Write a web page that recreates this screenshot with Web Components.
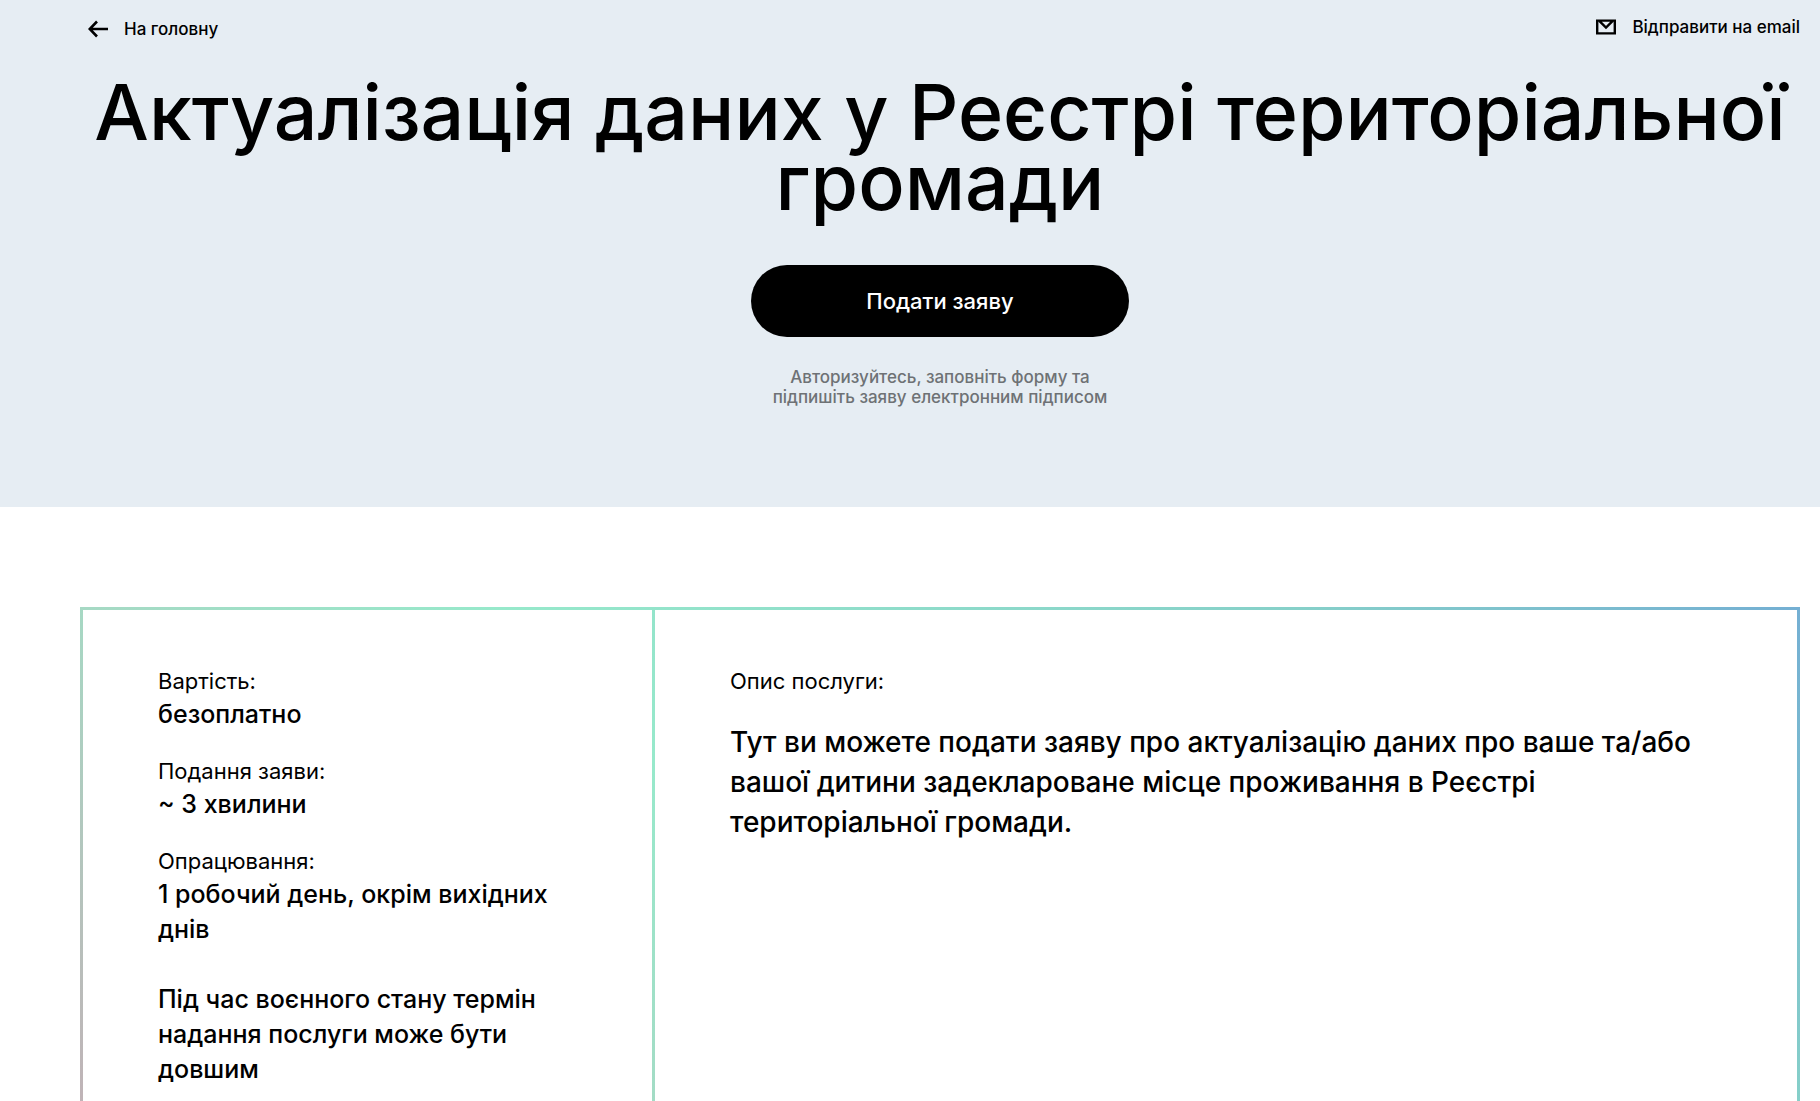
<!DOCTYPE html>
<html lang="uk">
<head>
<meta charset="utf-8">
<title>Актуалізація даних у Реєстрі територіальної громади</title>
<style>
  html, body { height: 100%; }
  body { margin: 0; overflow: hidden; background: #fff; color: #000; font-family: Inter, "Noto Sans", sans-serif; font-weight: 500; }
</style>
</head>
<body>
<service-page></service-page>
<script>
const define = (name, html) => customElements.define(name, class extends HTMLElement {
  constructor() {
    super();
    this.attachShadow({ mode: 'open' }).innerHTML = html;
  }
});

define('icon-link', `
  <style>
    :host { display: block; }
    a { display: flex; align-items: center; gap: 16px; color: inherit; text-decoration: none; font-size: 17px; line-height: 20px; }
  </style>
  <a href="#"><slot name="icon"></slot><span><slot></slot></span></a>`);

define('submit-button', `
  <style>
    :host { display: block; }
    button { width: 378px; height: 72px; border: 0; border-radius: 36px; background: #000; color: #fff; font: inherit; font-size: 22px; line-height: 28px; cursor: pointer; }
  </style>
  <button type="button"><slot></slot></button>`);

define('service-hero', `
  <style>
    :host { display: block; box-sizing: border-box; min-height: 507px; padding: 0 20px 0 80px; background: #e6edf3; }
    nav { display: flex; justify-content: space-between; align-items: flex-start; padding: 17px 0 0 8px; }
    .back { padding-top: 2px; }
    h1 { margin: 38px 0 0; text-align: center; font-size: 77px; line-height: 70px; font-weight: 500; }
    .action { display: flex; flex-direction: column; align-items: center; margin-top: 48px; gap: 30px; }
    p { margin: 0; max-width: 378px; text-align: center; font-size: 17px; line-height: 20px; color: #6e7275; }
    svg { display: block; }
  </style>
  <nav>
    <icon-link class="back"><svg slot="icon" width="20" height="18" viewBox="0 0 20 18" fill="none" stroke="#000" stroke-width="2.6"><path d="M20 9H2M9 1.5L1.7 9L9 16.5"/></svg>На головну</icon-link>
    <icon-link><svg slot="icon" width="20" height="16" viewBox="0 0 20 16" fill="none" stroke="#000" stroke-width="2.4"><path d="M1.2 1.6H18.8V14.4H1.2ZM3.5 2.2L10 8.6L16.5 2.2"/></svg>Відправити на email</icon-link>
  </nav>
  <h1><slot name="title"></slot></h1>
  <div class="action">
    <submit-button><slot name="action"></slot></submit-button>
    <p><slot name="hint"></slot></p>
  </div>`);

define('fact-item', `
  <style>
    :host { display: block; }
    .label { padding-bottom: 1px; font-size: 22px; line-height: 30px; font-weight: 400; }
    .value { font-size: 25px; line-height: 35px; }
  </style>
  <div class="label"><slot name="label"></slot></div>
  <div class="value"><slot></slot></div>`);

define('info-card', `
  <style>
    :host { display: grid; grid-template-columns: minmax(0, 569fr) minmax(0, 1142fr); gap: 3px; padding: 3px; margin: 100px 20px 100px 80px;
      background: linear-gradient(45deg, #c3aeb5 0%, #a6d9c4 25%, #97e9cb 43%, #86d0c9 78%, #74afd3 100%); }
    section { background: #fff; padding: 56px 75px 80px; }
    .facts { display: flex; flex-direction: column; gap: 24px; }
    h2 { margin: 0 0 26px; font-size: 22px; line-height: 30px; font-weight: 400; }
    .about { font-size: 28px; line-height: 40px; }
  </style>
  <section class="facts"><slot></slot></section>
  <section><h2><slot name="heading"></slot></h2><div class="about"><slot name="about"></slot></div></section>`);

define('service-page', `
  <style>:host { display: block; }</style>
  <service-hero>
    <span slot="title">Актуалізація даних у Реєстрі територіальної громади</span>
    <span slot="action">Подати заяву</span>
    <span slot="hint">Авторизуйтесь, заповніть форму та<br>підпишіть заяву електронним підписом</span>
  </service-hero>
  <info-card>
    <fact-item><span slot="label">Вартість:</span>безоплатно</fact-item>
    <fact-item><span slot="label">Подання заяви:</span>~ 3 хвилини</fact-item>
    <fact-item><span slot="label">Опрацювання:</span>1 робочий день, окрім вихідних днів<br><br>Під час воєнного стану термін надання послуги може бути довшим</fact-item>
    <span slot="heading">Опис послуги:</span>
    <span slot="about">Тут ви можете подати заяву про актуалізацію даних про ваше та/або вашої дитини задеклароване місце проживання в Реєстрі територіальної громади.</span>
  </info-card>`);
</script>
</body>
</html>
